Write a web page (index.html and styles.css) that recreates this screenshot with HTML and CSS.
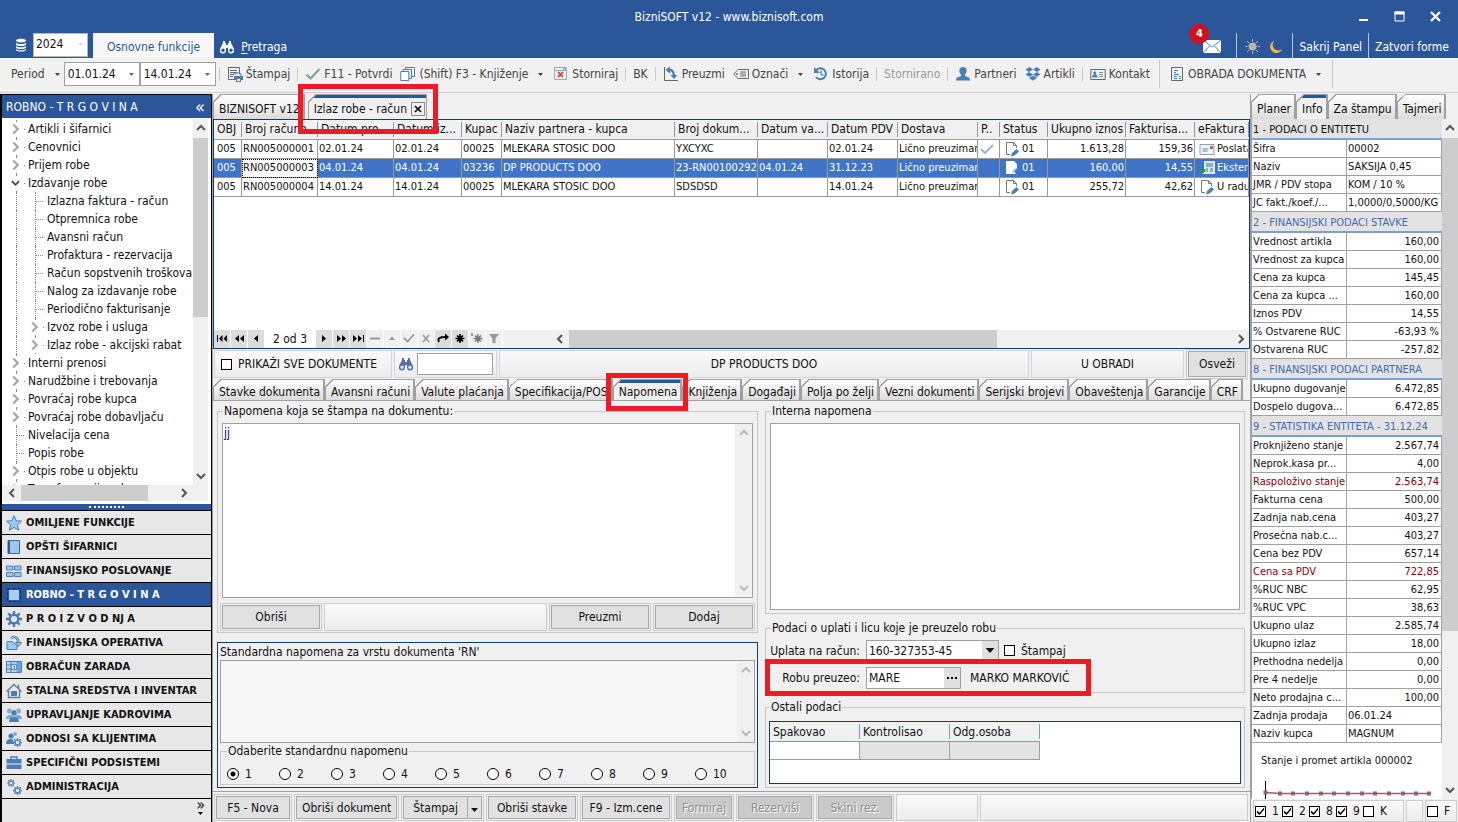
FILE: index.html
```html
<!DOCTYPE html>
<html lang="sr-Latn">
<head>
<meta charset="utf-8">
<title>BizniSOFT v12</title>
<link rel="stylesheet" href="styles.css">
</head>
<body>
<svg class="sprite" aria-hidden="true">
  <symbol id="i-caret" viewBox="0 0 7 4"><path d="M0 0h7L3.500 4z" fill="currentColor"/></symbol>
  <symbol id="i-right" viewBox="0 0 8 10"><path d="M2 1l4 4-4 4" fill="none" stroke="currentColor" stroke-width="2"/></symbol>
  <symbol id="i-left" viewBox="0 0 8 10"><path d="M6 1L2 5l4 4" fill="none" stroke="currentColor" stroke-width="2"/></symbol>
  <symbol id="i-up" viewBox="0 0 10 8"><path d="M1 6l4-4 4 4" fill="none" stroke="currentColor" stroke-width="2"/></symbol>
  <symbol id="i-down" viewBox="0 0 10 8"><path d="M1 2l4 4 4-4" fill="none" stroke="currentColor" stroke-width="2"/></symbol>
  <symbol id="i-binoc" viewBox="0 0 16 16"><path d="M4 2h2v2h1v2h2V4h1V2h2v2l1 2 2 4v1a3 3 0 0 1-6 1V9H7v3a3 3 0 0 1-6-1v-1l2-4 1-2z" fill="currentColor"/><circle cx="4" cy="11.300" r="1.700" fill="var(--lens,#2b579a)"/><circle cx="12" cy="11.300" r="1.700" fill="var(--lens,#2b579a)"/></symbol>
  <symbol id="i-edit" viewBox="0 0 16 16"><path d="M2.500 1.500h7l3 3v3l-6 6h-4z" fill="#fff"/><path d="M2.500 13.500v-12h7l3 3V7M9.500 1.500v3h3M2.500 13.500H6" fill="none" stroke="#777"/><path d="M7 15.500l1-3.500 4.500-4 2.500 2.500-4.500 4z" fill="#4a80b4"/></symbol>
  <symbol id="i-gear" viewBox="0 0 16 16"><path d="M8 0v16M0 8h16M2.300 2.300l11.400 11.400M13.700 2.300L2.300 13.700" stroke="#4a7fb5" stroke-width="2.400"/><circle cx="8" cy="8" r="4.300" fill="#e8e8e8" stroke="#4a7fb5" stroke-width="2.400"/></symbol>
</svg>

<header class="top">
  <div class="titlebar">
    <h1>BizniSOFT v12 - www.biznisoft.com</h1>
    <div class="winbtns">
      <button aria-label="Minimize"><svg viewBox="0 0 11 11"><path d="M1 9h9" stroke="#fff" stroke-width="2"/></svg></button>
      <button aria-label="Maximize"><svg viewBox="0 0 11 11"><path d="M1 1h9v9H1z" fill="none" stroke="#fff"/><path d="M.5 2h10" stroke="#fff" stroke-width="3"/></svg></button>
      <button aria-label="Close"><svg viewBox="0 0 11 11"><path d="M1 1l9 9M10 1l-9 9" stroke="#fff" stroke-width="2.200"/></svg></button>
    </div>
  </div>
  <div class="menurow">
    <svg class="db" viewBox="0 0 12 14"><path d="M1 2.500C1 0 11 0 11 2.500S1 5 1 2.500zM1 4.500c1 2 9 2 10 0v2c-1 2-9 2-10 0zM1 7.800c1 2 9 2 10 0v1.700c-1 2-9 2-10 0zM1 10.800c1 2 9 2 10 0V12c-1 2-9 2-10 0z" fill="#fff"/></svg>
    <label class="year"><select aria-label="Godina"><option>2024</option></select><svg><use href="#i-caret"/></svg></label>
    <button class="ribbon">Osnovne funkcije</button>
    <button class="search"><svg><use href="#i-binoc"/></svg><span><u>P</u>retraga</span></button>
    <div class="grow"></div>
    <button class="mail" aria-label="Poruke"><svg viewBox="0 0 18 13"><path d="M0 0h18v13H0z" fill="#fff"/><path d="M0 0l9 7 9-7M0 13l6.500-7M18 13l-6.500-7" fill="none" stroke="#3a8fd0"/></svg><b class="badge">4</b></button>
    <span class="vline"></span>
    <button class="theme" aria-label="Svetla tema"><svg viewBox="0 0 15 15"><path d="M7.500 0v15M0 7.500h15M2 2l11 11M13 2L2 13" stroke="#b9b4ae"/><circle cx="7.500" cy="7.500" r="5" fill="#2b579a"/><circle cx="7.500" cy="7.500" r="4" fill="#b9b4ae"/></svg></button>
    <button class="theme" aria-label="Tamna tema"><svg viewBox="0 0 15 15"><path d="M6.500 1.500a6.400 6.400 0 1 0 8 8.500A5.200 5.200 0 0 1 6.500 1.500z" fill="#fbb43a"/></svg></button>
    <span class="vline"></span>
    <button class="txt">Sakrij Panel</button>
    <span class="vline"></span>
    <button class="txt">Zatvori forme</button>
  </div>
</header>

<nav class="toolbar">
  <button class="period">Period<svg class="car"><use href="#i-caret"/></svg></button>
  <label class="date"><input aria-label="Od" value="01.01.24"><svg class="car"><use href="#i-caret"/></svg></label>
  <label class="date"><input aria-label="Do" value="14.01.24"><svg class="car"><use href="#i-caret"/></svg></label>
  <span class="sep"></span>
  <button><svg viewBox="0 0 16 16"><path d="M1 1.500h11.500V8M1.500 1v12.500H7" fill="none" stroke="#666"/><path d="M3 4.500h7M3 6.500h7M3 8.500h4M3 10.500h3" stroke="#666"/><path d="M8 9V7h5l1 1v2" fill="none" stroke="#4a7fb5"/><path d="M7 10h9v4h-2v2H9v-2H7z" fill="#4a7fb5"/><path d="M10 13h3v2h-3z" fill="#fff"/></svg>Štampaj</button>
  <span class="sep"></span>
  <button><svg viewBox="0 0 16 16"><path d="M1.500 8.500l4 4 9-9.500" fill="none" stroke="#7ba48f" stroke-width="2"/></svg>F11 - Potvrdi</button>
  <button><svg viewBox="0 0 16 16"><path d="M.8 5.500h8v9h-8z" fill="#fff" stroke="#4a7fb5"/><path d="M3 5V3.500h8.500v9H9M5.500 3.500V1.500h9v9h-3" fill="none" stroke="#4a7fb5"/></svg>(Shift) F3 - Knjiženje<svg class="car"><use href="#i-caret"/></svg></button>
  <button><svg viewBox="0 0 16 16"><path d="M1.500 1.500h12v12h-12zM1.500 4.500h12" fill="none" stroke="#8fa9c7"/><path d="M10 2h4v3h-4z" fill="#9fb6d2"/><path d="M5 6l5 5M10 6l-5 5" stroke="#d2543c" stroke-width="1.800"/></svg>Storniraj</button>
  <span class="sep"></span>
  <button>BK</button>
  <span class="sep"></span>
  <button><svg viewBox="0 0 16 16"><path d="M1.500 1v13.500H15" fill="none" stroke="#666"/><path d="M4 4c4-1 7 1 7 6" fill="none" stroke="#4a7fb5" stroke-width="2.400"/><path d="M7 .5v7L2.500 4zM7.500 9h7L11 13z" fill="#4a7fb5"/></svg>Preuzmi</button>
  <button><svg viewBox="0 0 16 16"><path d="M5 3.500h10.500v9H5L.8 8z" fill="none" stroke="#666"/><circle cx="4" cy="8" r="1" fill="#666"/><path d="M7 6h6M7 8h6M7 10h6" stroke="#666"/></svg>Označi<svg class="car"><use href="#i-caret"/></svg></button>
  <button><svg viewBox="0 0 16 16"><path d="M3 4.500A5.500 5.500 0 1 1 3 11" fill="none" stroke="#4a7fb5" stroke-width="2"/><path d="M1 1v6h6z" fill="#4a7fb5"/><path d="M8 4.500V8l2.500 1.500" fill="none" stroke="#4a7fb5" stroke-width="1.300"/></svg>Istorija</button>
  <span class="sep"></span>
  <button disabled>Stornirano</button>
  <span class="sep"></span>
  <button><svg viewBox="0 0 16 16"><path d="M8 1c5 0 4 6 2 7.500V10l4 1.500q1 .5 1 3H1q0-2.500 1-3L6 10V8.500C4 7 3 1 8 1z" fill="#4a7fb5"/></svg>Partneri</button>
  <button><svg viewBox="0 0 16 16"><path d="M4.500 1L8 3.500 4 6 .5 3.500zM11.500 1L8 3.500 12 6l3.500-2.500zM4 6l4 2.500L4.500 11 .5 8.500zM12 6L8 8.500l3.500 2.500 4-2.500zM4 12l4-2.500 4 2.500-4 2.700z" fill="#4a7fb5"/></svg>Artikli</button>
  <span class="sep"></span>
  <button><svg viewBox="0 0 16 16"><path d="M.8 3.500h14.400v10H.8z" fill="none" stroke="#666"/><circle cx="4.800" cy="6.800" r="1.500" fill="#4a7fb5"/><path d="M2.500 11q0-2.500 2.300-2.500T7.200 11zM9 6.500h4M9 8.500h4M9 10.500h4" fill="#4a7fb5" stroke="#4a7fb5" stroke-width=".8"/></svg>Kontakt</button>
  <span class="sep tall"></span>
  <button class="obrada"><svg viewBox="0 0 16 16"><path d="M2.500 1.500h11v13h-11z" fill="none" stroke="#666"/><path d="M5 4.500h4M5 6.500h2M5 10.500h3M5 8.500h5M5 12.500h3M10 10.500h2M10 12.500h2" stroke="#4a7fb5"/></svg>OBRADA DOKUMENTA<svg class="car"><use href="#i-caret"/></svg></button>
  <span class="sep tall"></span>
</nav>

<main class="body">
  <aside class="side">
    <h2><span>ROBNO - T R G O V I N A</span><button aria-label="Skupi">«</button></h2>
    <div class="treebox">
      <ul class="tree">
        <li><i class="g tw"><svg><use href="#i-right"/></svg></i>Artikli i šifarnici</li>
        <li><i class="g tw"><svg><use href="#i-right"/></svg></i>Cenovnici</li>
        <li><i class="g tw"><svg><use href="#i-right"/></svg></i>Prijem robe</li>
        <li><i class="g tw open"><svg><use href="#i-down"/></svg></i>Izdavanje robe</li>
        <li><i class="v"></i><i class="g"></i>Izlazna faktura - račun</li>
        <li><i class="v"></i><i class="g"></i>Otpremnica robe</li>
        <li><i class="v"></i><i class="g"></i>Avansni račun</li>
        <li><i class="v"></i><i class="g"></i>Profaktura - rezervacija</li>
        <li><i class="v"></i><i class="g"></i>Račun sopstvenih troškova</li>
        <li><i class="v"></i><i class="g"></i>Nalog za izdavanje robe</li>
        <li><i class="v"></i><i class="g"></i>Periodično fakturisanje</li>
        <li><i class="v"></i><i class="g tw"><svg><use href="#i-right"/></svg></i>Izvoz robe i usluga</li>
        <li><i class="v"></i><i class="g tw"><svg><use href="#i-right"/></svg></i>Izlaz robe - akcijski rabat</li>
        <li><i class="g tw"><svg><use href="#i-right"/></svg></i>Interni prenosi</li>
        <li><i class="g tw"><svg><use href="#i-right"/></svg></i>Narudžbine i trebovanja</li>
        <li><i class="g tw"><svg><use href="#i-right"/></svg></i>Povraćaj robe kupca</li>
        <li><i class="g tw"><svg><use href="#i-right"/></svg></i>Povraćaj robe dobavljaču</li>
        <li><i class="g"></i>Nivelacija cena</li>
        <li><i class="g"></i>Popis robe</li>
        <li><i class="g tw"><svg><use href="#i-right"/></svg></i>Otpis robe u objektu</li>
        <li><i class="g tw"><svg><use href="#i-right"/></svg></i>Transformacija robe</li>
      </ul>
      <div class="vsb"><svg><use href="#i-up"/></svg><i class="thumb"></i><svg><use href="#i-down"/></svg></div>
      <div class="hsb"><svg><use href="#i-left"/></svg><i class="thumb"></i><svg><use href="#i-right"/></svg></div>
    </div>
    <div class="grip"><i></i></div>
    <nav class="modules">
      <button><svg viewBox="0 0 16 16"><path d="M8 .8l2.200 4.900 5.300.5-4 3.600 1.200 5.400L8 12.400l-4.700 2.800 1.200-5.400-4-3.600 5.300-.5z" fill="#9cc8ee" stroke="#4a7fb5"/></svg>OMILJENE FUNKCIJE</button>
      <button><svg viewBox="0 0 16 16"><path d="M2 1.500h11.500v13H2z" fill="#9cc8ee" stroke="#3d6a94"/><path d="M3 2v12" stroke="#34587c" stroke-width="2"/></svg>OPŠTI ŠIFARNICI</button>
      <button><svg viewBox="0 0 16 16"><path d="M.5 3h6.500v4H.5zM8.500 3H15v4H8.500zM.5 9.500h6.500v4H.5zM8.500 9.500H15v4H8.500z" fill="#9cc8ee" stroke="#4a7fb5"/></svg>FINANSIJSKO POSLOVANJE</button>
      <button class="on"><svg viewBox="0 0 16 16"><path d="M1.500 1.500h13v13h-13z" fill="none" stroke="#16305c" stroke-dasharray="3 2"/><path d="M3 3h10v10H3z" fill="#a9cdf3"/></svg>ROBNO - T R G O V I N A</button>
      <button><svg><use href="#i-gear"/></svg>P R O I Z V O D NJ A</button>
      <button><svg viewBox="0 0 16 16"><path d="M1 6.500h5l5 4v4H1z" fill="#9cc8ee" stroke="#4a7fb5"/><path d="M5 3.500c3-3 7-1 7.500 4" fill="none" stroke="#4a7fb5" stroke-width="2.600"/><path d="M5 3.500c3-3 7-1 7.500 4" fill="none" stroke="#b9d8f2"/><path d="M9.500 7.500h6l-3 4z" fill="#9cc8ee" stroke="#4a7fb5"/></svg>FINANSIJSKA OPERATIVA</button>
      <button><svg viewBox="0 0 16 16"><path d="M.5 2.500h15v11H.5zM.5 6h15M.5 10h15M5 2.500v11" fill="#b9d8f2" stroke="#4a7fb5"/><path d="M10.500 3h4.500v10h-4.500z" fill="#6fa3d4"/><circle cx="8" cy="8" r="3" fill="#d8eafa" stroke="#4a7fb5"/><path d="M7 7h1.500v3" fill="none" stroke="#4a7fb5"/></svg>OBRAČUN ZARADA</button>
      <button><svg viewBox="0 0 16 16"><path d="M.5 8.500L8 1.500l7.500 7M2.500 7.500v7h11v-7M12.500 5V1.500" fill="none" stroke="#667c92" stroke-width="1.400"/><path d="M5 8h6v5H5z" fill="#4a7fb5"/></svg>STALNA SREDSTVA I INVENTAR</button>
      <button><svg viewBox="0 0 16 16"><circle cx="3.500" cy="4" r="2.500" fill="#7fabd3"/><circle cx="12.500" cy="4" r="2.500" fill="#7fabd3"/><path d="M0 12q0-4 4-4h8q4 0 4 4z" fill="#7fabd3"/><circle cx="8" cy="6" r="3.200" fill="#4a7fb5" stroke="#e8e8e8" stroke-width=".7"/><path d="M3 15q0-5 5-5t5 5z" fill="#4a7fb5"/></svg>UPRAVLJANJE KADROVIMA</button>
      <button><svg viewBox="0 0 16 16"><circle cx="5" cy="5" r="2.600" fill="#4a7fb5"/><circle cx="9" cy="3" r="2" fill="#7fabd3"/><path d="M0 13q0-5 5-5 3 0 3 5z" fill="#4a7fb5"/><use href="#i-gear" x="7" y="7" width="9" height="9"/></svg>ODNOSI SA KLIJENTIMA</button>
      <button><svg viewBox="0 0 16 16"><path d="M5 4V2h6v2" fill="none" stroke="#4a7fb5" stroke-width="1.500"/><path d="M.5 4h15v4.500H.5zM.5 9.500h15V14H.5z" fill="#4a7fb5"/></svg>SPECIFIČNI PODSISTEMI</button>
      <button><svg viewBox="0 0 16 16"><use href="#i-gear" x="1" y="0" width="8" height="8"/><use href="#i-gear" x="7" y="7" width="9" height="9"/></svg>ADMINISTRACIJA</button>
    </nav>
    <div class="more"><span>»</span><svg><use href="#i-caret"/></svg></div>
  </aside>

  <section class="center">
    <div class="tabs big">
      <button class="tab">BIZNISOFT v12</button>
      <div class="tab on closable">Izlaz robe - račun<button class="x" aria-label="Zatvori"><svg viewBox="0 0 8 8"><path d="M1 1l6 6M7 1L1 7" stroke="#000" stroke-width="1.600"/></svg></button><span class="mark m1"></span></div>
    </div>
    <div class="gridbox">
      <table class="grid">
        <colgroup><col style="width:28px"><col style="width:76px"><col style="width:76px"><col style="width:68px"><col style="width:40px"><col style="width:173px"><col style="width:83px"><col style="width:70px"><col style="width:70px"><col style="width:80px"><col style="width:22px"><col style="width:48px"><col style="width:78px"><col style="width:69px"><col></colgroup>
        <thead><tr><th>OBJ</th><th>Broj računa</th><th>Datum pro...</th><th>Datum iz...</th><th>Kupac</th><th>Naziv partnera - kupca</th><th>Broj dokum...</th><th>Datum va...</th><th>Datum PDV</th><th>Dostava</th><th>P..</th><th>Status</th><th>Ukupno iznos</th><th>Fakturisa...</th><th>eFaktura</th></tr></thead>
        <tbody>
          <tr><td>005</td><td>RN005000001</td><td>02.01.24</td><td>02.01.24</td><td>00025</td><td>MLEKARA STOSIC DOO</td><td>YXCYXC</td><td></td><td>02.01.24</td><td>Lično preuziman</td><td><svg viewBox="0 0 16 16"><path d="M2 8l4 4 8-8" fill="none" stroke="#9db3d6" stroke-width="2"/></svg></td><td class="st"><svg><use href="#i-edit"/></svg>01</td><td class="r">1.613,28</td><td class="r">159,36</td><td class="st"><svg viewBox="0 0 16 16"><path d="M1 3.500h14v10H1z" fill="#f2f5fb" stroke="#8b9cc0"/><path d="M3.500 8h6M3.500 10h5" stroke="#5f7fb8"/><path d="M11 5h3v3h-3z" fill="#d25a4a"/></svg>Poslata</td></tr>
          <tr class="sel"><td>005</td><td class="focus">RN005000003</td><td>04.01.24</td><td>04.01.24</td><td>03236</td><td>DP PRODUCTS DOO</td><td>23-RN00100292</td><td>04.01.24</td><td>31.12.23</td><td>Lično preuziman</td><td></td><td class="st"><svg viewBox="0 0 16 16"><path d="M2 1h8l3 3v4l-3 3 2 3H2z" fill="#fff"/><path d="M8 14l2-5 4-1" fill="#8fb2e0"/></svg>01</td><td class="r">160,00</td><td class="r">14,55</td><td class="st"><svg viewBox="0 0 16 16"><path d="M5 1h11v13H3V9h2z" fill="#dbe9f5"/><path d="M7 4h7M7 6h7M7 9h2M11 9h3M7 11h2M11 11h3" stroke="#3d6fa8"/><path d="M0 10.500h5M3.500 7.500l3 3-3 3z" fill="#2b9a3c" stroke="#2b9a3c"/></svg>Ekster</td></tr>
          <tr><td>005</td><td>RN005000004</td><td>14.01.24</td><td>14.01.24</td><td>00025</td><td>MLEKARA STOSIC DOO</td><td>SDSDSD</td><td></td><td>14.01.24</td><td>Lično preuziman</td><td></td><td class="st"><svg><use href="#i-edit"/></svg>01</td><td class="r">255,72</td><td class="r">42,62</td><td class="st"><svg><use href="#i-edit"/></svg>U radu</td></tr>
        </tbody>
      </table>
      <div class="grow"></div>
      <div class="pager">
        <button aria-label="Prvi"><svg viewBox="0 0 16 16"><path d="M3 5h1v7H3zM8.500 5v7L5 8.500zM13 5v7L9.500 8.500z"/></svg></button>
        <button aria-label="Strana nazad"><svg viewBox="0 0 16 16"><path d="M8 5v7L4 8.500zM13 5v7L9 8.500z"/></svg></button>
        <button aria-label="Prethodni"><svg viewBox="0 0 16 16"><path d="M10 5v7L6 8.500z"/></svg></button>
        <span class="pos">2 od 3</span>
        <button aria-label="Sledeći"><svg viewBox="0 0 16 16"><path d="M6 5v7l4-3.500z"/></svg></button>
        <button aria-label="Strana napred"><svg viewBox="0 0 16 16"><path d="M4 5v7l4-3.500zM9 5v7l4-3.500z"/></svg></button>
        <button aria-label="Poslednji"><svg viewBox="0 0 16 16"><path d="M3 5v7l4-3.500zM8 5v7l4-3.500zM13 5h1v7h-1z"/></svg></button>
        <button class="off" aria-label="Obriši"><svg viewBox="0 0 16 16"><path d="M3 7.500h10v2H3z"/></svg></button>
        <button class="off" aria-label="Izmeni"><svg viewBox="0 0 16 16"><path d="M5 10h6L8 6.500z"/></svg></button>
        <button class="off" aria-label="Potvrdi"><svg viewBox="0 0 16 16"><path d="M3 8l3.500 3.500L13 4.500" fill="none" stroke="#999" stroke-width="1.800"/></svg></button>
        <button class="off" aria-label="Otkaži"><svg viewBox="0 0 16 16"><path d="M5 5l6 7M11 5l-6 7" stroke="#999" stroke-width="1.600"/></svg></button>
        <button aria-label="Osveži"><svg viewBox="0 0 16 16"><path d="M4 12c-2-4 1-5 7-5" fill="none" stroke="#000" stroke-width="1.800"/><path d="M10 3.500v7L14 7z"/></svg></button>
        <button aria-label="Obeleži"><svg viewBox="0 0 16 16"><path d="M8 4v9M3.500 8.500h9M5 5.500l6 6M11 5.500l-6 6" stroke="#000" stroke-width="1.600"/></svg></button>
        <button class="off" aria-label="Idi na oznaku"><svg viewBox="0 0 16 16"><path d="M9 4v9M4.500 8.500h9M6 5.500l6 6M12 5.500l-6 6M3 3v3" stroke="#777" stroke-width="1.400"/></svg></button>
        <button class="off" aria-label="Filter"><svg viewBox="0 0 16 16"><path d="M3 4h10L9.500 8.500V13h-3V8.500z"/></svg></button>
        <div class="hsb main"><svg><use href="#i-left"/></svg><i class="thumb"></i><svg><use href="#i-right"/></svg></div>
      </div>
    </div>
    <div class="filter">
      <label class="pan chk all"><input type="checkbox">PRIKAŽI SVE DOKUMENTE</label>
      <label class="pan find"><svg><use href="#i-binoc"/></svg><input aria-label="Traži"></label>
      <div class="pan name">DP PRODUCTS DOO</div>
      <div class="pan state">U OBRADI</div>
      <button class="btn">Osveži</button>
    </div>
    <div class="tabs small">
      <button class="tab">Stavke dokumenta</button><button class="tab">Avansni računi</button><button class="tab">Valute plaćanja</button><button class="tab">Specifikacija/POS</button><div class="tab on">Napomena<span class="mark m2"></span></div><button class="tab">Knjiženja</button><button class="tab">Događaji</button><button class="tab">Polja po želji</button><button class="tab">Vezni dokumenti</button><button class="tab">Serijski brojevi</button><button class="tab">Obaveštenja</button><button class="tab">Garancije</button><button class="tab">CRF</button>
    </div>
    <div class="notes">
      <div class="col">
        <fieldset class="fs a">
          <legend>Napomena koja se štampa na dokumentu:</legend>
          <div class="ta"><textarea aria-label="Napomena koja se štampa na dokumentu">jj</textarea><div class="vsb dim"><svg><use href="#i-up"/></svg><svg><use href="#i-down"/></svg></div></div>
          <div class="acts"><button class="btn">Obriši</button><span class="pan"></span><button class="btn">Preuzmi</button><button class="btn">Dodaj</button></div>
        </fieldset>
        <div class="std">
          <label for="std">Standardna napomena za vrstu dokumenta 'RN'</label>
          <div class="ta ro"><textarea id="std" readonly></textarea><div class="vsb dim"><svg><use href="#i-up"/></svg><svg><use href="#i-down"/></svg></div></div>
          <fieldset class="fs radios">
            <legend>Odaberite standardnu napomenu</legend>
            <label><input type="radio" name="n" checked>1</label><label><input type="radio" name="n">2</label><label><input type="radio" name="n">3</label><label><input type="radio" name="n">4</label><label><input type="radio" name="n">5</label><label><input type="radio" name="n">6</label><label><input type="radio" name="n">7</label><label><input type="radio" name="n">8</label><label><input type="radio" name="n">9</label><label><input type="radio" name="n">10</label>
          </fieldset>
        </div>
      </div>
      <div class="col">
        <fieldset class="fs b">
          <legend>Interna napomena</legend>
          <div class="ta"><textarea aria-label="Interna napomena"></textarea></div>
        </fieldset>
        <fieldset class="fs pay">
          <legend>Podaci o uplati i licu koje je preuzelo robu</legend>
          <div class="line"><label for="acc">Uplata na račun:</label><span class="combo wide"><select id="acc"><option>160-327353-45</option></select><i class="dd"><svg><use href="#i-caret"/></svg></i></span><label class="chk"><input type="checkbox">Štampaj</label></div>
          <div class="line"><label for="who">Robu preuzeo:</label><span class="combo"><input id="who" value="MARE"><button class="dd" aria-label="Izaberi"><svg viewBox="0 0 10 2"><path d="M0 0h2v2H0zM4 0h2v2H4zM8 0h2v2H8z"/></svg></button></span><span class="who">MARKO MARKOVIĆ</span><span class="mark m3"></span></div>
        </fieldset>
        <fieldset class="fs other">
          <legend>Ostali podaci</legend>
          <div class="obox"><table><thead><tr><th>Spakovao</th><th>Kontrolisao</th><th>Odg.osoba</th></tr></thead><tbody><tr><td></td><td class="d"></td><td class="d"></td></tr></tbody></table></div>
        </fieldset>
      </div>
    </div>
    <footer class="bottom">
      <button class="btn w2">F5 - Nova</button>
      <button class="btn">Obriši dokument</button>
      <span class="split"><button class="btn">Štampaj</button><button class="btn arrow" aria-label="Više"><svg><use href="#i-caret"/></svg></button></span>
      <button class="btn w3">Obriši stavke</button>
      <button class="btn w3">F9 - Izm.cene</button>
      <button class="btn" disabled>Formiraj</button>
      <button class="btn w2" disabled>Rezerviši</button>
      <button class="btn w2" disabled>Skini rez.</button>
      <span class="pan p1"></span><span class="pan p2"></span>
    </footer>
  </section>

  <aside class="info">
    <div class="tabs big"><button class="tab">Planer</button><button class="tab on">Info</button><button class="tab">Za štampu</button><button class="tab">Tajmeri</button></div>
    <div class="inforow">
      <div class="infobody">
        <table class="props">
          <tbody>
          <tr class="h k"><th colspan="2">1 - PODACI O ENTITETU</th></tr>
          <tr><td>Šifra</td><td>00002</td></tr>
          <tr><td>Naziv</td><td>SAKSIJA 0,45</td></tr>
          <tr><td>JMR / PDV stopa</td><td>KOM / 10 %</td></tr>
          <tr><td>JC fakt./koef./...</td><td>1,0000/0,5000/KG</td></tr>
          <tr class="h"><th colspan="2">2 - FINANSIJSKI PODACI STAVKE</th></tr>
          <tr class="n"><td>Vrednost artikla</td><td>160,00</td></tr>
          <tr class="n"><td>Vrednost za kupca</td><td>160,00</td></tr>
          <tr class="n"><td>Cena za kupca</td><td>145,45</td></tr>
          <tr class="n"><td>Cena za kupca ...</td><td>160,00</td></tr>
          <tr class="n"><td>Iznos PDV</td><td>14,55</td></tr>
          <tr class="n"><td>% Ostvarene RUC</td><td>-63,93 %</td></tr>
          <tr class="n"><td>Ostvarena RUC</td><td>-257,82</td></tr>
          <tr class="h"><th colspan="2">8 - FINANSIJSKI PODACI PARTNERA</th></tr>
          <tr class="n"><td>Ukupno dugovanje</td><td>6.472,85</td></tr>
          <tr class="n"><td>Dospelo dugova...</td><td>6.472,85</td></tr>
          <tr class="h"><th colspan="2">9 - STATISTIKA ENTITETA - 31.12.24</th></tr>
          <tr class="n"><td>Proknjiženo stanje</td><td>2.567,74</td></tr>
          <tr class="n"><td>Neprok.kasa pr...</td><td>4,00</td></tr>
          <tr class="n red"><td>Raspoloživo stanje</td><td>2.563,74</td></tr>
          <tr class="n"><td>Fakturna cena</td><td>500,00</td></tr>
          <tr class="n"><td>Zadnja nab.cena</td><td>403,27</td></tr>
          <tr class="n"><td>Prosečna nab.c...</td><td>403,27</td></tr>
          <tr class="n"><td>Cena bez PDV</td><td>657,14</td></tr>
          <tr class="n red"><td>Cena sa PDV</td><td>722,85</td></tr>
          <tr class="n"><td>%RUC NBC</td><td>62,95</td></tr>
          <tr class="n"><td>%RUC VPC</td><td>38,63</td></tr>
          <tr class="n"><td>Ukupno ulaz</td><td>2.585,74</td></tr>
          <tr class="n"><td>Ukupno izlaz</td><td>18,00</td></tr>
          <tr class="n"><td>Prethodna nedelja</td><td>0,00</td></tr>
          <tr class="n"><td>Pre 4 nedelje</td><td>0,00</td></tr>
          <tr class="n"><td>Neto prodajna c...</td><td>100,00</td></tr>
          <tr><td>Zadnja prodaja</td><td>06.01.24</td></tr>
          <tr><td>Naziv kupca</td><td>MAGNUM</td></tr>
          </tbody>
        </table>
        <div class="chart"><p>Stanje i promet artikla 000002</p>
          <svg viewBox="0 0 190 18"><path d="M13.500 0v18" stroke="#000"/><path d="M13.500 11.500L28 12.500H177" fill="none" stroke="#96607c" stroke-width="1.500"/><path d="M11.500 11.500h4M26 12.500h4M39 12.500h4M53 12.500h4M67 12.500h4M80 12.500h4M94 12.500h4M108 12.500h4M121 12.500h4M135 12.500h4M149 12.500h4M162 12.500h4M175 12.500h4" stroke="#96607c" stroke-width="4"/></svg>
        </div>
      </div>
      <div class="vsb big"><svg><use href="#i-up"/></svg><i class="thumb"></i><svg><use href="#i-down"/></svg></div>
    </div>
    <div class="checks">
      <div class="pan"><label class="chk"><input type="checkbox" checked>1</label><label class="chk"><input type="checkbox" checked>2</label><label class="chk"><input type="checkbox" checked>8</label><label class="chk"><input type="checkbox" checked>9</label><label class="chk"><input type="checkbox">K</label></div>
      <span class="pan e"></span>
      <div class="pan f"><label class="chk"><input type="checkbox">F</label></div>
    </div>
  </aside>
</main>
</body>
</html>
```
FILE: styles.css
```css
:root {
  --blue: #2b579a;
  --navy: #14387f;
  --face: #f0f0f0;
  --line: #a0a0a0;
  --soft: #c8c8c8;
  --mark: #ed1c24;
}
* { box-sizing: border-box; }
body {
  margin: 0;
  min-height: 100vh;
  display: flex;
  flex-direction: column;
  background: var(--face);
  color: #111;
  font: 12px/16px "DejaVu Sans Condensed", "Noto Sans", sans-serif;
}
button, input, select, textarea { font: inherit; color: inherit; margin: 0; padding: 0; border: 0; background: none; border-radius: 0; }
button { white-space: nowrap; }
select { appearance: none; }
svg { flex: none; width: 16px; height: 16px; }
.sprite { position: absolute; width: 0; height: 0; }
.grow { flex: 1; }

/* header */
.top { background: var(--blue); color: #fff; }
.titlebar { display: grid; grid-template-columns: 1fr auto 1fr; align-items: center; height: 33px; }
.titlebar h1 { grid-column: 2; margin: 0; font-size: 12px; font-weight: 400; }
.winbtns { display: flex; justify-content: flex-end; gap: 25px; padding-right: 17px; }
.winbtns button { display: flex; }
.winbtns svg { width: 11px; height: 11px; }
.menurow { display: flex; align-items: stretch; height: 25px; padding-right: 3px; }
.menurow button { display: flex; align-items: center; }
.db { width: 12px; height: 14px; margin: 5px 6px 0 15px; align-self: flex-start; }
.year { display: flex; align-items: center; width: 55px; height: 24px; padding: 0 4px 2px 2px; margin-right: 5px; background: #fff; color: #111; border: 1px solid #b8b8b8; }
.year select { flex: 1; width: 10px; }
.year svg { width: 5px; height: 3px; color: #ddd; }
.ribbon { padding: 3px 14px 0; background: #f7f7f7; color: var(--blue); }
.search { gap: 6px; padding: 3px 5px 0; }
.search u { text-underline-offset: 2px; }
.mail { position: relative; margin-right: 15px; padding-top: 1px; }
.mail svg { width: 18px; height: 13px; }
.badge { position: absolute; left: -14px; top: -9px; width: 20px; height: 20px; border-radius: 10px; background: #d0111b; font-size: 11px; line-height: 20px; text-align: center; }
.vline { width: 1px; background: #b9c7de; }
.theme { margin-left: 8px; padding-top: 1px; }
.theme svg { width: 15px; height: 15px; }
.theme + .vline { margin-left: 9px; }
.txt { padding: 3px 6px 0; }

/* toolbar */
.toolbar { display: flex; align-items: center; height: 35px; padding: 0 0 2px 7px; border-bottom: 1px solid #cfcfcf; background: #f1f1f1; color: #444; }
.toolbar button { display: flex; align-items: center; gap: 3px; padding: 0 4px; }
.toolbar button:disabled { color: #999; }
.toolbar .car { width: 5px; height: 3px; margin: 0 2px 0 7px; }
.toolbar .period .car { margin-right: 0; }
.date { display: flex; align-items: center; width: 76px; height: 24px; border: 1px solid var(--line); background: #fff; color: #111; padding: 0 3px; }
.date input { flex: 1; width: 10px; }
.toolbar .date .car { margin: 0 2px; color: #666; }
.sep { width: 1px; height: 14px; margin: 0 3px; background: var(--soft); }
.sep.tall { height: 28px; margin: 0 5px; }

.body { flex: 1; display: grid; grid-template-columns: 212px minmax(0, 1fr) 208px; padding-top: 1px; }

/* sidebar */
.side { display: flex; flex-direction: column; border: 1px solid #000; border-left-width: 2px; background: #e8e8e8; }
.side h2 { display: flex; justify-content: space-between; align-items: center; margin: 0; height: 23px; padding: 0 6px 0 4px; background: var(--blue); color: #fff; font-size: 12px; font-weight: 400; }
.side h2 button { font-size: 18px; line-height: 16px; }
.treebox { flex: 1; display: grid; grid-template-columns: minmax(0, 1fr) 15px; grid-template-rows: 1fr 16px; padding: 1px 3px 3px 0; background: #fff; min-height: 384px; }
.tree { margin: 0; padding: 1px 0 0; list-style: none; height: 366px; overflow: hidden; }
.tree li { display: flex; height: 18px; line-height: 18px; white-space: nowrap; }
.v, .g { position: relative; flex: none; }
.v { width: 19px; }
.g { width: 26px; }
.v::before, .g::before { content: ""; position: absolute; left: 14px; top: 0; bottom: 0; border-left: 1px dotted #888; }
.g::after { content: ""; position: absolute; left: 14px; top: 9px; width: 8px; border-top: 1px dotted #888; }
.tw svg { position: absolute; z-index: 1; left: 9px; top: 2px; width: 9px; height: 14px; background: #fff; color: #a6a6a6; }
.tw.open svg { color: #444; }
.tw::after { left: 22px; width: 1px; }
.vsb { display: flex; flex-direction: column; align-items: center; justify-content: space-between; padding: 5px 0; background: var(--face); color: #555; }
.vsb svg { width: 10px; height: 8px; }
.vsb .thumb { width: 100%; height: 179px; margin-top: 6px; background: #cdcdcd; }
.vsb .thumb + svg { margin-top: auto; }
.hsb { grid-column: 1 / -1; display: flex; align-items: center; padding: 0 20px 0 6px; background: var(--face); color: #555; }
.hsb svg { width: 8px; height: 10px; }
.hsb .thumb { width: 127px; align-self: stretch; margin-left: 5px; background: #cdcdcd; }
.hsb .thumb + svg { margin-left: auto; }
.grip { display: flex; justify-content: center; align-items: center; height: 6px; background: var(--blue); }
.grip i { width: 35px; border-top: 2px dotted #fff; }
.modules { display: flex; flex-direction: column; }
.modules button { display: flex; align-items: center; gap: 4px; height: 24px; padding: 0 4px; border-top: 1px solid #000; font-size: 11px; font-weight: 700; }
.modules .on { background: var(--blue); color: #fff; }
.more { display: flex; flex-direction: column; align-items: flex-end; height: 24px; border-top: 1px solid #000; padding: 1px 6px; font-size: 16px; line-height: 10px; }
.more svg { width: 5px; height: 3px; margin: 2px 2px 0; }

/* tabs */
.tabs { display: flex; align-items: stretch; }
.tabs.big { height: 25px; }
.tabs.small { height: 21px; }
.tab { position: relative; display: flex; align-items: center; white-space: nowrap; padding: 3px 3px 0 5px; border: 1px solid var(--line); border-bottom: 0; border-right-width: 2px; background: linear-gradient(#fff, #dcdcdc); }
.tab::before { content: ""; position: absolute; left: -1px; top: -1px; width: 8px; height: 8px; background: linear-gradient(135deg, var(--face) 50%, var(--line) 50%, var(--line) 60%, transparent 60%); }
.tab.on { background: linear-gradient(var(--blue) 3px, var(--face) 3px); }
.center .big { gap: 3px; }
.tab.closable { padding-right: 1px; border-right-width: 1px; }
.x { display: flex; margin-left: 4px; padding: 2px; border: 1px solid #888; }
.x svg { width: 8px; height: 8px; }
.mark { position: absolute; z-index: 5; border: 5px solid var(--mark); pointer-events: none; }
.m1 { inset: -11px -12px -15px -11px; }
.m2 { inset: -7px -8px -11px -8px; }
.m3 { left: -5px; top: -5px; width: 326px; height: 37px; }

/* center */
.center { display: flex; flex-direction: column; min-width: 0; border-left: 1px solid var(--line); }
.gridbox { display: flex; flex-direction: column; height: 230px; border: 1px solid var(--navy); background: #fff; }
.grid { width: 100%; table-layout: fixed; border-collapse: separate; border-spacing: 0; }
.grid th, .grid td { height: 19px; padding: 0 1px; text-align: left; white-space: nowrap; overflow: hidden; }
.grid th { height: 20px; padding: 0 0 0 3px; line-height: 19px; font-weight: 400; background: linear-gradient(#7b9bcf, #7b9bcf) right center / 1px 15px no-repeat var(--face); border-bottom: 1px solid #9a9a9a; }
.grid td { padding: 0 0 0 1px; font-size: 11px; line-height: 18px; border-right: 1px solid #9a9a9a; border-bottom: 1px solid #9a9a9a; }
.grid td:first-child { padding-left: 3px; }
.grid td svg { vertical-align: top; margin-top: 1px; }
.grid .st { padding-left: 4px; }
.grid .st svg { margin-right: 2px; }
.grid .r { padding-right: 1px; text-align: right; }
.grid .sel td { background: #4074c8; color: #fff; }
.grid .sel .focus { background: #fff; color: #111; outline: 1px dotted #000; outline-offset: -1px; }
.pager { display: flex; gap: 1px; height: 18px; background: #fff; }
.pager button { display: flex; justify-content: center; width: 16px; background: #dcdcdc; }
.pager .off { background: var(--face); fill: #999; }
.pos { width: 50px; text-align: center; line-height: 18px; }
.hsb.main { flex: 1; padding: 0 4px 0 53px; }
.hsb.main .thumb { width: 428px; }
.pan { border: 1px solid #ccc; background: linear-gradient(#fafafa, #ececec); }
.filter { display: flex; gap: 2px; padding: 1px 2px 1px 1px; height: 30px; }
.filter .pan { display: flex; align-items: center; border-color: #d4d4e0; }
.chk { display: flex; align-items: center; gap: 6px; }
.chk input { appearance: none; flex: none; width: 11px; height: 11px; border: 1px solid #000; background: #fff; }
.chk input:checked::before { content: ""; display: block; width: 9px; height: 9px; background: #000; clip-path: polygon(10% 45%, 40% 70%, 90% 10%, 90% 35%, 40% 95%, 10% 70%); }
.filter .all { width: 178px; padding-left: 6px; }
.find { width: 103px; padding: 0 3px; gap: 3px; color: #5570a8; --lens: #d8e2f4; }
.find input { flex: 1; width: 40px; height: 22px; border: 1px solid var(--line); background: #fff; }
.filter .name { flex: 1; justify-content: center; }
.filter .state { width: 153px; justify-content: center; }
.btn { padding: 0 5px; border: 1px solid #a8a8a8; background: #e1e1e1; outline: 1px solid #ccc; outline-offset: 1px; }
.btn:disabled { background: #cacaca; color: #8d8d8d; text-shadow: 1px 1px #fff; }
.filter .btn { width: 58px; margin: 1px 2px; }
.notes { flex: 1; display: grid; grid-template-columns: minmax(0, 541fr) minmax(0, 480fr); gap: 7px; padding: 2px 5px 3px 4px; border-top: 1px solid var(--line); }
.col { display: flex; flex-direction: column; }
.fs { margin: 0; min-width: 0; padding: 5px 4px 3px; border: 1px solid var(--soft); }
.fs legend { padding: 0 1px; margin-left: 1px; line-height: 16px; }
.fs.a { flex: 1; display: flex; flex-direction: column; padding: 4px 4px 0; }
.ta { flex: 1; display: flex; border: 1px solid var(--line); background: #fff; }
.ta textarea { flex: 1; min-width: 0; resize: none; padding: 1px; color: #00008b; outline: 0; }
.ta .vsb { width: 17px; }
.ro { background: #f7f7f7; }
.dim { color: #b8b8b8; }
.acts { display: grid; grid-template-columns: 98px 1fr 98px 98px; gap: 6px; padding-top: 6px; height: 33px; margin-bottom: 1px; }
.acts .btn { margin: 1px 0 2px; }
.acts .pan { margin: -1px -2px 0 -2px; }
.std { display: flex; flex-direction: column; height: 146px; margin-top: 9px; padding: 1px 2px 2px; border: 1px solid var(--navy); }
.radios { display: flex; height: 42px; padding: 7px 6px 0; }
.radios label { flex: none; display: flex; align-items: center; gap: 6px; width: 52px; }
.fs.radios legend { margin-left: 0; }
.radios input { appearance: none; width: 12px; height: 12px; border: 1px solid #000; border-radius: 6px; background: #fff; }
.radios input:checked { background: radial-gradient(#000 2px, #fff 3px); }
.fs.b { flex: 1; display: flex; padding-top: 4px; }
.pay { margin-top: 6px; padding: 1px 4px; }
.line { position: relative; display: flex; align-items: center; height: 27px; }
.line label:first-child { width: 96px; padding-right: 6px; text-align: right; white-space: nowrap; }
.combo { display: flex; width: 95px; height: 22px; border: 1px solid var(--line); background: #fff; }
.combo.wide { width: 133px; margin-right: 5px; }
.combo input, .combo select { flex: 1; min-width: 0; padding-left: 2px; }
.dd { display: flex; align-items: center; justify-content: center; width: 16px; background: #e0e0e0; }
.dd svg { width: 10px; height: 5px; }
button.dd svg { height: 2px; }
.who { margin-left: 9px; }
.other { margin-top: 6px; padding: 6px 3px 3px; }
.obox { height: 63px; border: 1px solid var(--navy); background: #fff; }
.obox table { border-spacing: 0; table-layout: fixed; width: 270px; }
.obox th { height: 20px; padding: 0 3px; text-align: left; font-weight: 400; border-bottom: 1px solid #7b9bcf; background: linear-gradient(#7b9bcf, #7b9bcf) right center / 1px 15px no-repeat var(--face); }
.obox td { height: 18px; padding: 0; border: solid var(--line); border-width: 0 1px 1px 0; }
.obox .d { background: #e3e3e3; }
.bottom { display: flex; gap: 6px; height: 32px; padding: 4px 4px 3px 3px; border: solid var(--line); border-width: 1px 0; }
.bottom .w2 { width: 74px; }
.bottom .w3 { width: 88px; }
.split { display: flex; outline: 1px solid #ccc; outline-offset: 1px; }
.split .btn { outline: 0; padding: 0 9px; }
.split .arrow { padding: 0 3px; border-left: 0; }
.split svg { width: 7px; height: 4px; }
.bottom .pan { margin: -2px; }
.p1 { width: 82px; }
.p2 { flex: 1; }

/* info panel */
.info { display: flex; flex-direction: column; border-left: 1px solid var(--line); }
.inforow { flex: 1; display: flex; border-left: 1px solid var(--line); }
.infobody { flex: 1; display: flex; flex-direction: column; background: #fff; }
.props { width: 100%; table-layout: fixed; border-spacing: 0; font-size: 11px; }
.props td { height: 18px; padding: 0 2px 0 1px; line-height: 17px; white-space: nowrap; overflow: hidden; border: solid var(--line); border-width: 0 1px 1px 0; }
.props th { height: 21px; padding: 2px 1px 0; line-height: 17px; text-align: left; font-weight: 400; white-space: nowrap; color: #3f6bb5; background: #e3e3e3; border-bottom: 2px solid #7ba0d8; }
.props .k th { color: #111; }
.n td:last-child { text-align: right; }
.red td { color: #8b0000; }
.chart { flex: 1; display: flex; flex-direction: column; justify-content: space-between; }
.chart p { margin: 10px 0 0 9px; font-size: 11px; }
.chart svg { width: 190px; height: 18px; }
.vsb.big { width: 16px; }
.vsb.big .thumb { height: 493px; }
.checks { display: flex; gap: 2px; height: 24px; padding: 1px 1px 1px 2px; }
.checks .pan { display: flex; align-items: center; padding: 0 1px; }
.checks .pan:first-child { flex: 1; }
.checks .chk { gap: 6px; width: 27px; }
.checks .e { width: 17px; }
.checks .f { width: 32px; }
```
